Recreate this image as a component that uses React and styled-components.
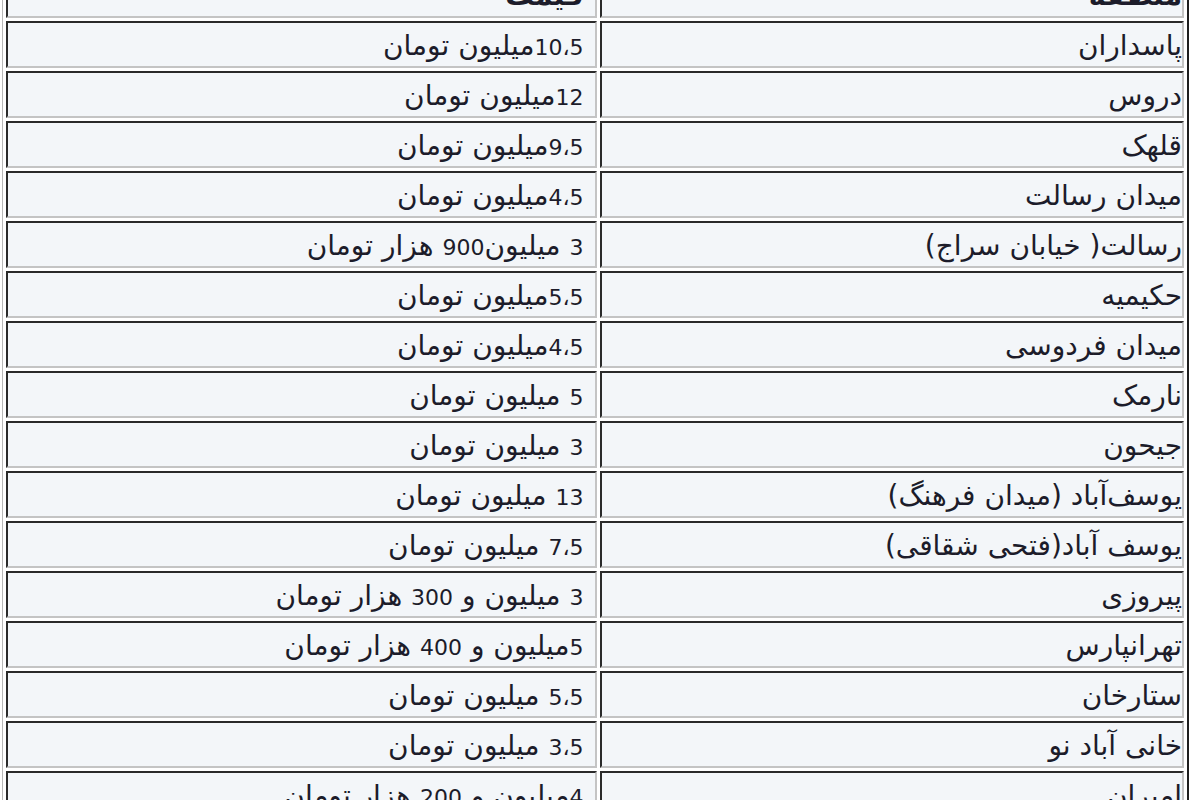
import React from "react";
import styled, { createGlobalStyle } from "styled-components";

const GlobalStyle = createGlobalStyle`
  html, body {
    margin: 0;
    padding: 0;
    background: #ffffff;
    overflow: hidden;
  }
`;

const Page = styled.div`
  width: 1200px;
  height: 800px;
  overflow: hidden;
`;

const PriceTable = styled.table`
  margin: -33px 0 0 2px;
  width: 1187px;
  table-layout: fixed;
  border-collapse: separate;
  border-spacing: 3px;
  border-top: 1px solid #b8b8b8;
  border-left: 1px solid #b8b8b8;
  border-right: 2px solid #1e1e1e;
  border-bottom: 2px solid #1e1e1e;
  font-family: "DejaVu Sans", "Noto Sans", sans-serif;
  font-size: 28px;
  color: #1c1c2a;
`;

const Cell = styled.td`
  box-sizing: border-box;
  width: ${({ $w }) => $w}px;
  height: 47px;
  padding: 2px ${({ $pad }) => $pad}px 0 4px;
  background: #f3f6f9;
  border-top: 2px solid #2a2a2a;
  border-right: 2px solid #c4c4c4;
  border-bottom: 2px solid #c4c4c4;
  border-left: 2px solid #2a2a2a;
  text-align: right;
  vertical-align: middle;
  white-space: nowrap;
  line-height: 1.05;
  font-weight: ${({ $head }) => ($head ? "bold" : "normal")};
`;

const Num = styled.span`
  font-size: 22px;
`;

const rows = [
  ["پاسداران", "10،5میلیون تومان"],
  ["دروس", "12میلیون تومان"],
  ["قلهک", "9،5میلیون تومان"],
  ["میدان رسالت", "4،5میلیون تومان"],
  ["رسالت( خیابان سراج)", "3 میلیون900 هزار تومان"],
  ["حکیمیه", "5،5میلیون تومان"],
  ["میدان فردوسی", "4،5میلیون تومان"],
  ["نارمک", "5 میلیون تومان"],
  ["جیحون", "3 میلیون تومان"],
  ["یوسف‌آباد (میدان فرهنگ)", "13 میلیون تومان"],
  ["یوسف آباد(فتحی شقاقی)", "7،5 میلیون تومان"],
  ["پیروزی", "3 میلیون و 300 هزار تومان"],
  ["تهرانپارس", "5میلیون و 400 هزار تومان"],
  ["ستارخان", "5،5 میلیون تومان"],
  ["خانی آباد نو", "3،5 میلیون تومان"],
  ["امیران", "4میلیون و 200 هزار تومان"],
];

// digits are drawn a bit smaller than the persian letters, like in tahoma
const Text = ({ children }) =>
  children
    .split(/(\d+(?:،\d+)?)/)
    .map((part, i) => (/\d/.test(part) ? <Num key={i}>{part}</Num> : part));

const Row = ({ area, price, head }) => (
  <tr>
    <Cell $w={584} $pad={0} $head={head}>
      <Text>{area}</Text>
    </Cell>
    <Cell $w={590} $pad={11} $head={head}>
      <Text>{price}</Text>
    </Cell>
  </tr>
);

const App = () => (
  <Page>
    <GlobalStyle />
    <PriceTable dir="rtl">
      <tbody>
        <Row area="منطقه" price="قیمت" head />
        {rows.map(([area, price]) => (
          <Row key={area} area={area} price={price} />
        ))}
      </tbody>
    </PriceTable>
  </Page>
);

export default App;
